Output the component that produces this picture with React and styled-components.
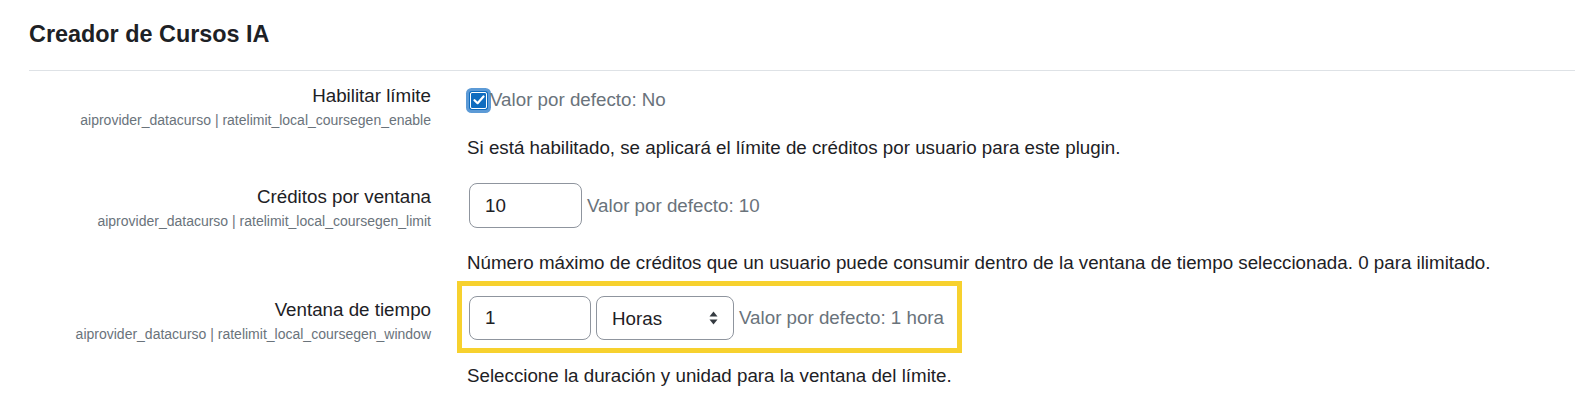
import React, { useState } from "react";
import styled, { createGlobalStyle } from "styled-components";

const GlobalStyle = createGlobalStyle`
  body {
    margin: 0;
    background: #fff;
    font-family: "Liberation Sans", Arial, sans-serif;
    color: #1d2125;
  }
`;

export default function App() {
  const [enabled, setEnabled] = useState(true);
  const [limit, setLimit] = useState("10");
  const [amount, setAmount] = useState("1");
  const [unit, setUnit] = useState("3600");

  return (
    <>
      <GlobalStyle />
      <Page>
        <Heading>Creador de Cursos IA</Heading>
        <Rule />

        <Setting>
          <LabelCol>
            <Title>Habilitar límite</Title>
            <Key>aiprovider_datacurso | ratelimit_local_coursegen_enable</Key>
          </LabelCol>
          <FieldCol>
            <Controls $tall={36}>
              <Check
                $checked={enabled}
                onClick={() => setEnabled(!enabled)}
                role="checkbox"
                aria-checked={enabled}
              >
                <svg width="12" height="10" viewBox="0 0 12 10">
                  <path
                    d="M1.5 5.2 L4.6 8.2 L10.5 1.5"
                    fill="none"
                    stroke="#fff"
                    strokeWidth="2.2"
                    strokeLinecap="round"
                    strokeLinejoin="round"
                  />
                </svg>
              </Check>
              <Default $gap={3}>Valor por defecto: No</Default>
            </Controls>
            <Description $top={16}>
              Si está habilitado, se aplicará el límite de créditos por usuario para este plugin.
            </Description>
          </FieldCol>
        </Setting>

        <Setting $top={21}>
          <LabelCol>
            <Title>Créditos por ventana</Title>
            <Key>aiprovider_datacurso | ratelimit_local_coursegen_limit</Key>
          </LabelCol>
          <FieldCol>
            <Controls>
              <TextInput
                $width={113}
                value={limit}
                onChange={(e) => setLimit(e.target.value)}
              />
              <Default $gap={5}>Valor por defecto: 10</Default>
            </Controls>
            <Description $top={21}>
              Número máximo de créditos que un usuario puede consumir dentro de la ventana de tiempo seleccionada. 0 para ilimitado.
            </Description>
          </FieldCol>
        </Setting>

        <Setting $top={19}>
          <LabelCol>
            <Title>Ventana de tiempo</Title>
            <Key>aiprovider_datacurso | ratelimit_local_coursegen_window</Key>
          </LabelCol>
          <FieldCol>
            <Highlight>
              <TextInput
                $width={122}
                value={amount}
                onChange={(e) => setAmount(e.target.value)}
              />
              <SelectWrap>
                <Select value={unit} onChange={(e) => setUnit(e.target.value)}>
                  <option value="60">Minutos</option>
                  <option value="3600">Horas</option>
                  <option value="86400">Días</option>
                </Select>
                <Arrows width="9" height="14" viewBox="0 0 9 14">
                  <path d="M4.5 0.5 L8.5 5.5 L0.5 5.5 Z" fill="#343a40" />
                  <path d="M4.5 13.5 L8.5 8.5 L0.5 8.5 Z" fill="#343a40" />
                </Arrows>
              </SelectWrap>
              <Default $gap={5}>Valor por defecto: 1 hora</Default>
            </Highlight>
            <Description $top={22}>
              Seleccione la duración y unidad para la ventana del límite.
            </Description>
          </FieldCol>
        </Setting>
      </Page>
    </>
  );
}

const Page = styled.div`
  padding: 20px 0 0 29px;
  overflow: hidden;
`;

const Heading = styled.h3`
  margin: 0;
  font-size: 23.4px;
  line-height: 28px;
  font-weight: 700;
  color: #1d2125;
`;

const Rule = styled.hr`
  margin: 22px 0 11px;
  border: 0;
  border-top: 1px solid #dee2e6;
`;

const Setting = styled.div`
  display: grid;
  grid-template-columns: 402px 1fr;
  column-gap: 36px;
  margin-top: ${(p) => p.$top || 0}px;
`;

const LabelCol = styled.div`
  display: flex;
  flex-direction: column;
  align-items: flex-end;
  text-align: right;
`;

const Title = styled.div`
  font-size: 18.75px;
  line-height: 28px;
  color: #1d2125;
`;

const Key = styled.div`
  font-size: 14px;
  line-height: 20px;
  color: #6a737b;
`;

const FieldCol = styled.div`
  display: flex;
  flex-direction: column;
  align-items: flex-start;
`;

const Controls = styled.div`
  display: flex;
  align-items: center;
  min-height: ${(p) => p.$tall || 0}px;
  margin-left: 2px;
`;

const Check = styled.span`
  width: 17px;
  height: 17px;
  box-sizing: border-box;
  margin-left: 1px;
  border-radius: 2px;
  border: 1.5px solid #fff;
  background: ${(p) => (p.$checked ? "#0f6cbf" : "#fff")};
  box-shadow: 0 0 0 1px #0f6cbf, 0 0 0 4px #5c9ad6;
  display: flex;
  align-items: center;
  justify-content: center;
  cursor: pointer;
`;

const Default = styled.span`
  margin-left: ${(p) => p.$gap}px;
  font-size: 18.75px;
  line-height: 28px;
  color: #6a737b;
`;

const Description = styled.div`
  margin-top: ${(p) => p.$top}px;
  font-size: 18.75px;
  line-height: 28px;
  color: #1d2125;
  white-space: nowrap;
`;

const TextInput = styled.input`
  box-sizing: border-box;
  width: ${(p) => p.$width}px;
  height: 45px;
  padding: 0 15px;
  border: 1px solid #8f959e;
  border-radius: 8px;
  font-family: "Liberation Sans", Arial, sans-serif;
  font-size: 18.75px;
  color: #1d2125;
  background: #fff;
  outline: none;
`;

const Highlight = styled.div`
  display: inline-flex;
  align-items: center;
  margin: -15px 0 -13px -10px;
  padding: 10px 13px 8px 7px;
  border: 5px solid #f7d12e;

  ${TextInput} {
    height: 44px;
  }
`;

const SelectWrap = styled.div`
  position: relative;
  margin-left: 5px;
  display: flex;
`;

const Select = styled.select`
  appearance: none;
  box-sizing: border-box;
  width: 138px;
  height: 44px;
  padding: 0 30px 0 15px;
  border: 1px solid #8f959e;
  border-radius: 8px;
  font-family: "Liberation Sans", Arial, sans-serif;
  font-size: 18.75px;
  color: #1d2125;
  background: #fff;
  outline: none;
`;

const Arrows = styled.svg`
  position: absolute;
  right: 16px;
  top: 50%;
  transform: translateY(-50%);
  pointer-events: none;
`;
